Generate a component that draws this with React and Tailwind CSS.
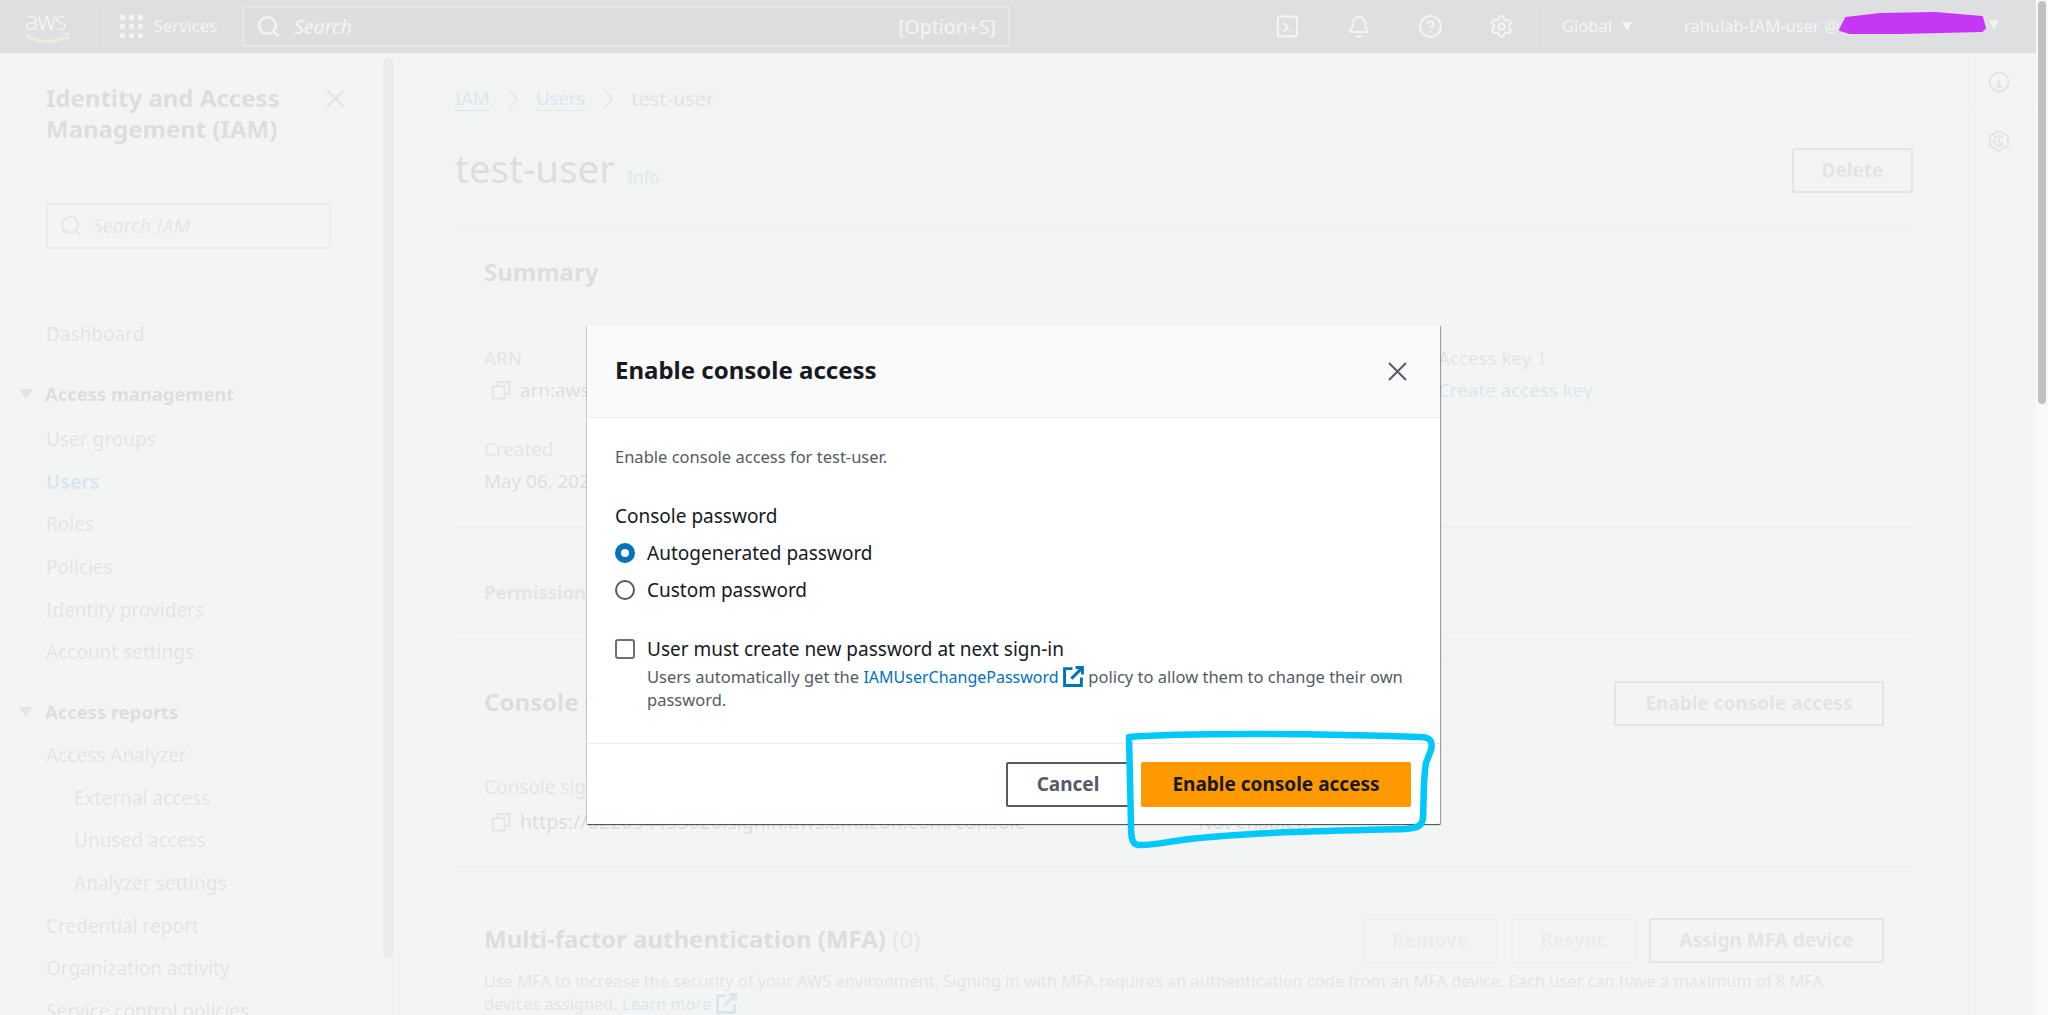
import { Search, Bell, Settings, CircleHelp } from 'lucide-react'

const fontStack = { fontFamily: '"Noto Sans", "Open Sans", sans-serif' }

function CloseIcon({ className = '' }) {
  return (
    <svg viewBox="0 0 21 19" className={`h-[19px] w-[21px] shrink-0 ${className}`} fill="none" stroke="#545b64" strokeWidth="2">
      <path d="m2 1 17 17M19 1 2 18" />
    </svg>
  )
}

function CopyIcon() {
  return (
    <svg viewBox="0 0 20 20" className="h-5 w-5 shrink-0" fill="none" stroke="#545b64" strokeWidth="2">
      <rect x="1.5" y="6.5" width="12" height="12" />
      <path d="M6 6V2h12.5v12H14" />
    </svg>
  )
}

function ExternalIcon({ color = '#0073bb', size = 21 }) {
  return (
    <svg viewBox="0 0 20 20" width={size} height={size} className="inline-block align-[-4px]" fill="none" stroke={color} strokeWidth="2.8">
      <path d="M9 2.5H1.5v16h16V11" />
      <path d="M8 12 18 2M12 1.5h6.5V8" />
    </svg>
  )
}

function GridIcon() {
  return (
    <svg viewBox="0 0 23 23" className="h-[23px] w-[23px]" fill="#ffffff">
      {[0, 9, 18].map((y) =>
        [0, 9, 18].map((x) => <rect key={`${x}-${y}`} x={x} y={y} width="5" height="5" rx="0.5" />),
      )}
    </svg>
  )
}

function TerminalIcon() {
  return (
    <svg viewBox="0 0 24 24" className="h-[23px] w-[23px]" fill="none" stroke="#ffffff" strokeWidth="2">
      <rect x="2" y="1.5" width="20" height="21" rx="2.5" />
      <path d="m8 8 4.5 4.5L8 17M14 17h2" />
    </svg>
  )
}

function NavSeparator({ className = '' }) {
  return <span className={`h-[40px] w-px bg-[#414750] ${className}`} />
}

function Caret({ className = '' }) {
  return <span className={`inline-block border-x-[5px] border-t-[9px] border-x-transparent border-t-white ${className}`} />
}

function TopNav() {
  return (
    <header className="flex h-[53px] shrink-0 items-center bg-[#232f3e] text-[16.5px] text-white">
      <div className="relative ml-[25px] h-[40px] w-[46px]">
        <span className="absolute left-0 top-[-2px] text-[25px] font-light leading-[30px] tracking-[-1px]">aws</span>
        <svg viewBox="0 0 46 14" className="absolute left-0 top-[25px] h-[14px] w-[46px]" fill="none">
          <path d="M1 3c12 8 28 8 40 2" stroke="#ff9900" strokeWidth="3" />
          <path d="M37 2h7l-3 7" stroke="#ff9900" strokeWidth="2" />
        </svg>
      </div>
      <NavSeparator className="ml-[25px]" />
      <span className="ml-[23px]">
        <GridIcon />
      </span>
      <span className="ml-[11px] w-[64px] whitespace-nowrap">Services</span>
      <div className="ml-[24px] flex h-[41px] w-[768px] items-center rounded-[2px] border-2 border-[#687078] bg-[#1e1e1e] pl-[12px] pr-[12px] text-[19.5px]">
        <Search className="h-[25px] w-[25px]" strokeWidth={2.2} />
        <span className="ml-[13px] flex-1 italic">Search</span>
        <span>[Option+S]</span>
      </div>
      <div className="ml-[260px] flex w-[34px] justify-center">
        <TerminalIcon />
      </div>
      <NavSeparator className="ml-[19px]" />
      <div className="ml-[18px] flex w-[34px] justify-center">
        <Bell className="h-[24px] w-[24px]" strokeWidth={2} />
      </div>
      <NavSeparator className="ml-[19px]" />
      <div className="ml-[17px] flex w-[34px] justify-center">
        <CircleHelp className="h-[25px] w-[25px]" strokeWidth={2} />
      </div>
      <NavSeparator className="ml-[18px]" />
      <div className="ml-[18px] flex w-[34px] justify-center">
        <Settings className="h-[25px] w-[25px]" strokeWidth={2} />
      </div>
      <NavSeparator className="ml-[18px]" />
      <span className="ml-[25px]">Global</span>
      <Caret className="ml-[10px]" />
      <NavSeparator className="ml-[27px]" />
      <span className="ml-[24px] whitespace-nowrap">rahulab-IAM-user @</span>
    </header>
  )
}

const sideItems = [
  { label: 'Access management', group: true, top: 'mt-[17px] mb-[2.5px]' },
  { label: 'User groups' },
  { label: 'Users', active: true },
  { label: 'Roles' },
  { label: 'Policies' },
  { label: 'Identity providers' },
  { label: 'Account settings' },
  { label: 'Access reports', group: true, top: 'mt-[17px] mb-[1px]' },
  { label: 'Access Analyzer' },
  { label: 'External access', nested: true },
  { label: 'Unused access', nested: true },
  { label: 'Analyzer settings', nested: true },
  { label: 'Credential report' },
  { label: 'Organization activity' },
  { label: 'Service control policies' },
]

function Sidebar() {
  return (
    <aside className="relative h-full w-[399px] shrink-0 border-r border-[#d5dbdb] bg-white">
      <div className="w-[382px]">
        <div className="flex h-[122px] justify-between border-b border-[#eaeded] pl-[46px] pr-[36px] pt-[29px]">
          <h2 className="w-[270px] text-[24px] font-bold leading-[31px] text-[#16191f]">Identity and Access Management (IAM)</h2>
          <CloseIcon className="mt-[7px]" />
        </div>
        <div className="ml-[46px] mt-[28px] flex h-[46px] w-[285px] items-center rounded-[2px] border-2 border-[#aab7b8] pl-[11px] text-[19.5px] italic text-[#687078]">
          <Search className="h-[24px] w-[24px]" strokeWidth={2.2} />
          <span className="ml-[10px]">Search IAM</span>
        </div>
        <nav className="mt-[64px] text-[19px] text-[#545b64]">
          <div className="flex h-[43px] items-center pl-[46px]">Dashboard</div>
          {sideItems.map((item) => (
            <div
              key={item.label}
              className={`flex h-[42.6px] items-center ${item.top ?? ''} ${item.nested ? 'pl-[74px]' : 'pl-[46px]'} ${
                item.active ? 'font-bold text-[#0073bb]' : ''
              } ${item.group ? 'text-[18.4px] font-bold text-[#16191f]' : ''}`}
            >
              {item.group ? (
                <span className="-ml-[27px] mr-[12px] inline-block border-x-[7px] border-t-[10px] border-x-transparent border-t-[#545b64]" />
              ) : null}
              {item.label}
            </div>
          ))}
        </nav>
      </div>
      <div className="absolute left-[383px] top-[4px] h-[901px] w-[11px] rounded-full bg-[#aab0b0]" />
    </aside>
  )
}

function OutlineButton({ children, width, muted = false, className = '' }) {
  return (
    <button
      className={`h-[45px] shrink-0 rounded-[2px] border-2 text-[19px] font-bold ${
        muted ? 'border-[#d5dbdb] text-[#aab7b8]' : 'border-[#545b64] text-[#545b64]'
      } ${className}`}
      style={{ width }}
    >
      {children}
    </button>
  )
}

function Card({ className = '', children }) {
  return <section className={`mx-[56px] border-t border-[#eaeded] bg-white shadow-[0_1px_1px_rgba(0,28,36,0.3)] ${className}`}>{children}</section>
}

function BreadcrumbArrow() {
  return (
    <svg viewBox="0 0 10 22" className="h-[22px] w-[10px]" fill="none" stroke="#687078" strokeWidth="1.6">
      <path d="m1 1 8 10-8 10" />
    </svg>
  )
}

function MainContent() {
  return (
    <main className="h-full flex-1 overflow-hidden">
      <div className="flex h-[90px] items-center gap-[18px] pl-[56px] pt-[1px] text-[18.5px]">
        <span className="border-b border-[#0073bb] leading-[24px] text-[#0073bb]">IAM</span>
        <BreadcrumbArrow />
        <span className="border-b border-[#0073bb] leading-[24px] text-[#0073bb]">Users</span>
        <BreadcrumbArrow />
        <span className="text-[19.5px] font-medium text-[#545b64]">test-user</span>
      </div>
      <div className="flex h-[85px] items-start justify-between pl-[56px] pr-[56px]">
        <div className="flex items-baseline gap-[12px] pt-[1px]">
          <h1 className="text-[38.5px] leading-[48px] text-[#16191f]">test-user</h1>
          <span className="text-[17px] text-[#0073bb]">Info</span>
        </div>
        <OutlineButton width={121} className="mt-[5px]">
          Delete
        </OutlineButton>
      </div>

      <Card className="h-[298px] pb-[1px]">
        <div className="flex h-[91px] items-center border-b border-[#eaeded] pl-[29px] pb-[4px] text-[24px] font-bold text-[#16191f]">Summary</div>
        <div className="relative pl-[29px] text-[18.8px] text-[#16191f]">
          <div className="flex pt-[26px]">
            <div className="w-[954px]">
              <div className="leading-[24px] text-[#545b64]">ARN</div>
              <div className="mt-[8px] flex items-center gap-[9px] pl-[7px] leading-[24px]">
                <CopyIcon />
                arn:aws:iam::022054455026:user/test-user
              </div>
              <div className="mt-[35px] leading-[24px] text-[#545b64]">Created</div>
              <div className="mt-[8px] leading-[24px]">May 06, 2024, 10:15 (UTC+05:30)</div>
            </div>
            <div>
              <div className="leading-[24px] text-[#545b64]">Access key 1</div>
              <div className="mt-[8px] leading-[24px] text-[#0073bb]">Create access key</div>
            </div>
          </div>
        </div>
      </Card>

      <div className="mx-[56px] mt-[52px] flex h-[55px] items-start border-b border-[#d5dbdb] pl-[29px] text-[18.5px] font-bold text-[#545b64]">
        Permissions
      </div>

      <Card className="mt-[25px] h-[208px]">
        <div className="flex h-[89px] items-center justify-between border-b border-[#eaeded] pl-[29px] pr-[29px]">
          <h2 className="mb-[2px] text-[24px] font-bold text-[#16191f]">Console sign-in</h2>
          <OutlineButton width={270} className="border-[#545b64]">
            Enable console access
          </OutlineButton>
        </div>
        <div className="flex pl-[29px] pt-[27px] text-[19px]">
          <div className="w-[714px]">
            <div className="leading-[24px] text-[#545b64]">Console sign-in link</div>
            <div className="mt-[11px] flex items-center gap-[9px] pl-[7px] text-[19.6px] leading-[24px] text-[#16191f]">
              <CopyIcon />
              https://022054455026.signin.aws.amazon.com/console
            </div>
          </div>
          <div>
            <div className="leading-[24px] text-[#545b64]">Console password</div>
            <div className="mt-[11px] leading-[24px] text-[#16191f]">Not enabled</div>
          </div>
        </div>
      </Card>

      <Card className="mt-[29px] h-[200px]">
        <div className="flex justify-between pl-[29px] pr-[29px] pt-[22px]">
          <h2 className="mt-[3px] text-[24px] font-bold text-[#16191f]">
            Multi-factor authentication (MFA) <span className="font-normal text-[#687078]">(0)</span>
          </h2>
          <div className="flex gap-[13px]">
            <OutlineButton width={136} muted>
              Remove
            </OutlineButton>
            <OutlineButton width={125} muted>
              Resync
            </OutlineButton>
            <OutlineButton width={235}>Assign MFA device</OutlineButton>
          </div>
        </div>
        <p className="mt-[7px] w-[1390px] pl-[29px] text-[16.4px] leading-[22.5px] text-[#545b64]">
          Use MFA to increase the security of your AWS environment. Signing in with MFA requires an authentication code from an MFA device. Each user can have a maximum of 8 MFA devices assigned.{' '}
          <span className="border-b border-[#0073bb] text-[#0073bb]">Learn more</span> <ExternalIcon />
        </p>
      </Card>
    </main>
  )
}

function RightRail() {
  return (
    <aside className="h-full w-[67px] shrink-0 border-l border-[#d5dbdb] bg-white">
      <div className="flex h-[58px] items-center justify-center border-b border-[#d5dbdb] pr-[8px]">
        <svg viewBox="0 0 22 22" className="h-[22px] w-[22px]" fill="none" stroke="#545b64" strokeWidth="2">
          <circle cx="11" cy="11" r="9.5" />
          <path d="M11 9.5v6M8.5 15.5h5M11 6v1.5" strokeWidth="2.4" />
        </svg>
      </div>
      <div className="flex h-[60px] items-center justify-center pr-[8px]">
        <svg viewBox="0 0 22 22" className="h-[22px] w-[22px]" fill="none" stroke="#545b64" strokeWidth="2">
          <path d="m11 1 9 5v10l-9 5-9-5V6z" />
          <path d="M15 8a5 5 0 1 0 0 6M11 8v4l3 2" />
        </svg>
      </div>
    </aside>
  )
}

function Modal() {
  return (
    <div className="absolute left-[587px] top-[325px] w-[853px] rounded-[1px] bg-white text-[#16191f] shadow-[0_1px_1px_rgba(0,28,36,0.5),1px_1px_1px_rgba(0,28,36,0.4),-1px_1px_1px_rgba(0,28,36,0.15)]">
      <div className="flex h-[93px] items-center justify-between border-b border-[#eaeded] bg-[#fafafa] pl-[28px] pr-[32px] pb-[2px]">
        <h2 className="text-[24px] font-bold">Enable console access</h2>
        <CloseIcon className="mt-[3px]" />
      </div>
      <div className="h-[325px] pl-[28px] pr-[30px] pt-[27px]">
        <p className="text-[16.5px] leading-[24px] text-[#545b64]">Enable console access for test-user.</p>
        <p className="mt-[35px] text-[19px] leading-[24px]">Console password</p>
        <label className="mt-[13px] flex h-[24px] items-center gap-[12px] text-[19px]">
          <span className="h-[20px] w-[20px] rounded-full border-[6px] border-[#0073bb] bg-white" />
          Autogenerated password
        </label>
        <label className="mt-[13px] flex h-[24px] items-center gap-[12px] text-[19px]">
          <span className="h-[20px] w-[20px] rounded-full border-2 border-[#545b64]" />
          Custom password
        </label>
        <label className="mt-[35px] flex h-[24px] items-center gap-[12px] text-[19px]">
          <span className="h-[20px] w-[20px] rounded-[3px] border-2 border-[#687078]" />
          User must create new password at next sign-in
        </label>
        <p className="ml-[32px] mt-[5px] text-[16.5px] leading-[22.5px] text-[#545b64]">
          Users automatically get the <span className="text-[16px] text-[#0073bb]">IAMUserChangePassword</span> <ExternalIcon /> policy to allow them to change their own password.
        </p>
      </div>
      <div className="flex h-[81px] items-start justify-end gap-[11px] border-t border-[#eaeded] pr-[29px] pt-[18px]">
        <OutlineButton width={124}>Cancel</OutlineButton>
        <button className="h-[45px] w-[270px] rounded-[2px] bg-[#ff9900] text-[19px] font-bold text-[#16191f]">Enable console access</button>
      </div>
    </div>
  )
}

export default function App() {
  return (
    <div className="flex h-screen overflow-hidden bg-[#f9f9f9]" style={fontStack}>
      <div className="relative w-[2036px] shrink-0 overflow-hidden bg-[#f2f3f3]">
        <TopNav />
        <div className="flex h-[962px]">
          <Sidebar />
          <MainContent />
          <RightRail />
        </div>
        <div className="absolute inset-0 bg-[#f2f3f3]/90" />
        <Modal />
        {/* marker scribbles drawn on top of the screenshot */}
        <svg className="pointer-events-none absolute inset-0 h-full w-full" fill="none" strokeLinecap="round" strokeLinejoin="round">
          <path
            d="M1129 737C1180 733 1300 733 1420 737C1431 737 1433 742 1431 750L1426 763C1423 780 1424 800 1423 818C1422 826 1418 828 1405 829C1330 831 1250 832 1190 839C1165 842 1150 846 1138 845C1132 844 1131 838 1131 825L1129 737Z"
            stroke="#00c8f8"
            strokeWidth="6.5"
          />
          <path d="M1840 30 1846 18 1880 14 1935 13 1982 17 1985 28 1982 31 1900 33 1850 33Z" fill="#c637f5" stroke="#c637f5" strokeWidth="2" />
        </svg>
        <span className="absolute left-[1989px] top-[20px] border-x-[5px] border-t-[9px] border-x-transparent border-t-[#f3f3f3]" />
      </div>
      <div className="relative w-[12px] bg-[#f9f9f9]">
        <div className="absolute left-[2px] right-[2px] top-[1px] h-[403px] rounded-full bg-[#c1c1c1]" />
      </div>
    </div>
  )
}
